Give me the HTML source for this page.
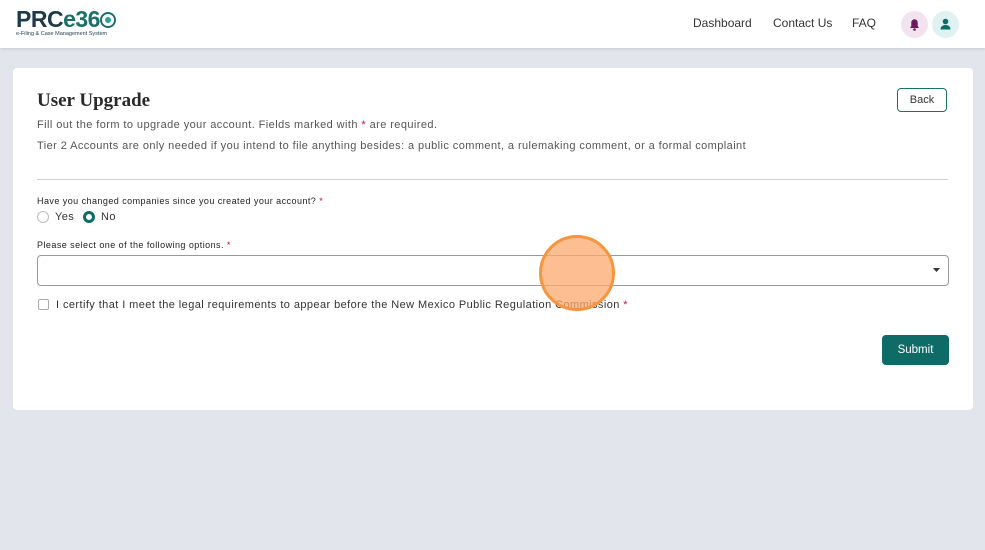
<!DOCTYPE html>
<html><head><meta charset="utf-8"><style>
*{box-sizing:border-box;margin:0;padding:0}
body{width:985px;height:550px;background:#e2e6ec;font-family:"Liberation Sans",sans-serif;color:#333;position:relative;overflow:hidden}
.hdr{position:absolute;left:0;top:0;width:985px;height:48px;background:#fff;box-shadow:0 1px 3px rgba(0,0,0,.12)}
.logo{position:absolute;left:16px;top:7px;font-weight:bold;font-size:23px;color:#1d3a4a;letter-spacing:-0.5px;line-height:24px}
.logo span{color:#1d6f6b}
.logo .ring{display:inline-block;width:16px;height:16px;border:2px solid #1d6f6b;border-radius:50%;vertical-align:-1px;position:relative}
.logo .ring:after{content:"";position:absolute;left:3px;top:3px;width:6px;height:6px;background:#2aa39a;border-radius:50%}
.sub{position:absolute;left:16px;top:31px;font-size:5.5px;color:#1d3a4a}
.nav{position:absolute;top:16px;font-size:12px;color:#333}
.ic{position:absolute;top:11px;width:27px;height:27px;border-radius:50%}
.card{position:absolute;left:13px;top:68px;width:960px;height:342px;background:#fff;border-radius:4px}
h1{position:absolute;left:37px;top:90px;font-family:"Liberation Serif",serif;font-size:19px;font-weight:bold;color:#2a2a2a}
.t{position:absolute;font-size:11px;color:#555;letter-spacing:0.42px}
.r{color:#c0152f}
.back{position:absolute;left:897px;top:88px;width:50px;height:24px;border:1px solid #1d6f6b;border-radius:4px;font-size:11px;text-align:center;line-height:22px;color:#333}
.hr{position:absolute;left:37px;top:179px;width:911px;height:1px;background:#d0d0d0}
.lbl{position:absolute;font-size:9px;color:#222;letter-spacing:0.45px}
.rad{position:absolute;top:211px;width:12px;height:12px;border-radius:50%}
.sel{position:absolute;left:37px;top:255px;width:912px;height:31px;border:1px solid #999;border-radius:4px}
.chk{position:absolute;left:38px;top:299px;width:11px;height:11px;border:1px solid #aaa;border-radius:2px}
.sub2{position:absolute;left:882px;top:335px;width:67px;height:30px;background:#0e6b66;color:#fff;border-radius:4px;font-size:11.5px;text-align:center;line-height:30px}
.dot{position:absolute;left:539px;top:235px;width:76px;height:76px;border-radius:50%;background:rgba(252,170,110,.75);border:3px solid #f5953f}
</style></head><body>
<div class="hdr">
<div class="logo">PRC<span>e36</span><span class="ring"></span></div>
<div class="sub">e-Filing &amp; Case Management System</div>
<div class="nav" style="left:693px">Dashboard</div>
<div class="nav" style="left:773px">Contact Us</div>
<div class="nav" style="left:852px">FAQ</div>
<div class="ic" style="left:901px;background:#f3e3ee"><svg width="27" height="27"><path d="M9 17h9l-1.3-2v-3.5a3.2 3.2 0 0 0-6.4 0V15z" fill="#6a1b5a"/><circle cx="13.5" cy="18.5" r="1.3" fill="#6a1b5a"/></svg></div>
<div class="ic" style="left:932px;background:#dff2f1"><svg width="27" height="27"><circle cx="13.5" cy="10.5" r="2.8" fill="#0e6b66"/><path d="M8.5 18.5c0-3.2 2.5-4.5 5-4.5s5 1.3 5 4.5z" fill="#0e6b66"/></svg></div>
</div>
<div class="card"></div>
<h1>User Upgrade</h1>
<div class="back">Back</div>
<div class="t" style="left:37px;top:119px">Fill out the form to upgrade your account. Fields marked with <span class="r">*</span> are required.</div>
<div class="t" style="left:37px;top:140px">Tier 2 Accounts are only needed if you intend to file anything besides: a public comment, a rulemaking comment, or a formal complaint</div>
<div class="hr"></div>
<div class="lbl" style="left:37px;top:196px">Have you changed companies since you created your account? <span class="r">*</span></div>
<div class="rad" style="left:37px;border:1px solid #bbb"></div>
<div class="t" style="left:55px;top:211px;color:#333">Yes</div>
<div class="rad" style="left:83px;border:3.5px solid #0e6b66"></div>
<div class="t" style="left:101px;top:211px;color:#333">No</div>
<div class="lbl" style="left:37px;top:240px">Please select one of the following options. <span class="r">*</span></div>
<div class="sel"><svg style="position:absolute;right:8px;top:12px" width="7" height="5"><path d="M0 0h7L3.5 4z" fill="#333"/></svg></div>
<div class="chk"></div>
<div class="t" style="left:56px;top:299px;color:#333">I certify that I meet the legal requirements to appear before the New Mexico Public Regulation Commission <span class="r">*</span></div>
<div class="sub2">Submit</div>
<div class="dot"></div>
</body></html>
